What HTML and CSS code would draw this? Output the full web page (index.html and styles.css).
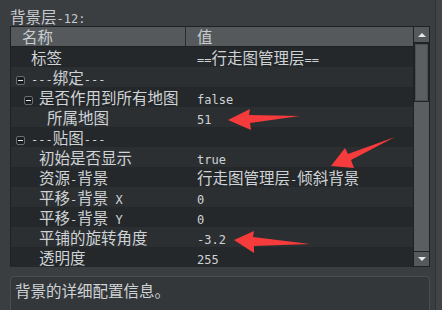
FILE: index.html
```html
<!DOCTYPE html>
<html lang="zh">
<head>
    <meta charset="UTF-8">
    <title>背景层属性</title>
    <link rel="stylesheet" href="styles.css">
</head>
<body>
    <div class="panel">
        <div class="title">背景层<span class="m">-12:</span></div>

        <!-- Property table -->
        <div class="table">
            <div class="grid">
                <div class="head">
                    <div class="name">名称</div>
                    <div class="val">值</div>
                </div>
                <div class="row">
                    <div class="name l0">标签</div>
                    <div class="val"><span class="m">==</span>行走图管理层<span class="m">==</span></div>
                </div>
                <div class="row">
                    <div class="name l0"><i class="toggle"></i><span class="m">---</span>绑定<span class="m">---</span></div>
                </div>
                <div class="row">
                    <div class="name l1"><i class="toggle"></i>是否作用到所有地图</div>
                    <div class="val"><span class="m">false</span></div>
                </div>
                <div class="row">
                    <div class="name l2">所属地图</div>
                    <div class="val"><span class="m">51</span></div>
                </div>
                <div class="row">
                    <div class="name l0"><i class="toggle"></i><span class="m">---</span>贴图<span class="m">---</span></div>
                </div>
                <div class="row">
                    <div class="name l1">初始是否显示</div>
                    <div class="val"><span class="m">true</span></div>
                </div>
                <div class="row">
                    <div class="name l1">资源<span class="m">-</span>背景</div>
                    <div class="val">行走图管理层<span class="m">-</span>倾斜背景</div>
                </div>
                <div class="row">
                    <div class="name l1">平移<span class="m">-</span>背景<span class="m"> X</span></div>
                    <div class="val"><span class="m">0</span></div>
                </div>
                <div class="row">
                    <div class="name l1">平移<span class="m">-</span>背景<span class="m"> Y</span></div>
                    <div class="val"><span class="m">0</span></div>
                </div>
                <div class="row">
                    <div class="name l1">平铺的旋转角度</div>
                    <div class="val"><span class="m">-3.2</span></div>
                </div>
                <div class="row">
                    <div class="name l1">透明度</div>
                    <div class="val"><span class="m">255</span></div>
                </div>
            </div>

            <!-- Scrollbar -->
            <div class="scrollbar">
                <div class="sb-btn"><i class="arrow-up"></i></div>
                <div class="sb-track">
                    <div class="sb-handle"></div>
                </div>
                <div class="sb-btn down"><i class="arrow-down"></i></div>
            </div>
        </div>

        <!-- Description -->
        <div class="desc">背景的详细配置信息。</div>
    </div>

    <!-- Red annotation arrows -->
    <svg class="marks" width="442" height="310" viewBox="0 0 442 310">
        <polygon points="228,120 250,109 249,115 300,116 250,123 251,130" />
        <polygon points="331,166 345,148 348,154 395,137 351,160 354,168" />
        <polygon points="234,240 254,231 253,237 310,244 254,246 254,253" />
    </svg>
</body>
</html>
```

FILE: styles.css
```css
/* Basic Reset */
body {
    margin: 0;
    width: 442px;
    height: 310px;
    overflow: hidden;
    background: #414447;
    font-family: 'Noto Sans CJK SC', sans-serif;
    font-size: 15.5px;
    color: #cfd3d6;
}

/* Latin text uses a narrow mono face */
.m {
    font-family: 'DejaVu Sans Mono', monospace;
    font-size: 12px;
}

/* Dock panel */
.panel {
    width: 436px;
    height: 310px;
    box-sizing: border-box;
    padding: 0 0 0 10px;
    background: #3b3e41;
    border-right: 1px solid #2f3234;
    display: flex;
    flex-direction: column;
}

.title {
    height: 26px;
    line-height: 20px;
    padding-top: 6px;
    box-sizing: border-box;
    color: #c7cbce;
}

/* Table */
.table {
    width: 420px;
    height: 241px;
    box-sizing: border-box;
    border: 1px solid #1f2123;
    display: flex;
    background: #26292b;
}

.grid {
    flex: 1;
    display: flex;
    flex-direction: column;
}

.head {
    display: flex;
    height: 19px;
    line-height: 19px;
    background: #55595c;
    border-bottom: 1px solid #1f2123;
    color: #c9cdd0;
}

.head .name {
    border-right: 1px solid #2a2c2e;
    padding-left: 11px;
}

.row {
    display: flex;
    height: 20px;
    line-height: 20px;
    background: #2c2f32;
}

.row:nth-child(even) {
    background: #25282a;
}

.name {
    width: 175px;
    flex-shrink: 0;
    box-sizing: border-box;
    white-space: nowrap;
}

.val {
    padding-left: 11px;
    white-space: nowrap;
}

.l0 { padding-left: 20px; }
.l1 { padding-left: 28px; }
.l2 { padding-left: 36px; }

/* Tree collapse box */
.toggle {
    display: inline-block;
    width: 9px;
    height: 9px;
    box-sizing: border-box;
    margin-left: -15px;
    margin-right: 6px;
    border: 1px solid #6a6e71;
    border-radius: 2px;
    background: linear-gradient(#e6e6e6, #e6e6e6) center / 5px 1px no-repeat, #1b1d1f;
    vertical-align: -1px;
}

/* Scrollbar */
.scrollbar {
    width: 16px;
    box-sizing: border-box;
    border-left: 1px solid #1f2123;
    display: flex;
    flex-direction: column;
    background: #5a5e61;
}

.sb-btn {
    height: 16px;
    box-sizing: border-box;
    background: #55595c;
    border-bottom: 1px solid #1f2123;
    display: flex;
    justify-content: center;
    align-items: center;
}

.sb-btn.down {
    height: 15px;
    border-bottom: none;
    border-top: 1px solid #1f2123;
}

.sb-track {
    flex: 1;
}

.sb-handle {
    height: 59px;
    box-sizing: border-box;
    border: 1px solid #222426;
    box-shadow: inset 0 0 0 1px #4a4e51;
    background: #5b5f62;
}

.arrow-up {
    width: 0;
    height: 0;
    border-left: 4px solid transparent;
    border-right: 4px solid transparent;
    border-bottom: 4px solid #e8e8e8;
}

.arrow-down {
    width: 0;
    height: 0;
    border-left: 4px solid transparent;
    border-right: 4px solid transparent;
    border-top: 4px solid #e8e8e8;
}

/* Description box */
.desc {
    width: 420px;
    flex: 1;
    margin-top: 9px;
    box-sizing: border-box;
    padding: 3px 4px;
    line-height: 20px;
    border: 1px solid #4a4d50;
    border-bottom: none;
    border-radius: 4px 4px 0 0;
    background: #34373a;
    color: #cfd3d6;
}

/* Annotation overlay */
.marks {
    position: absolute;
    left: 0;
    top: 0;
    pointer-events: none;
}

.marks polygon {
    fill: #f53b3b;
}
```
